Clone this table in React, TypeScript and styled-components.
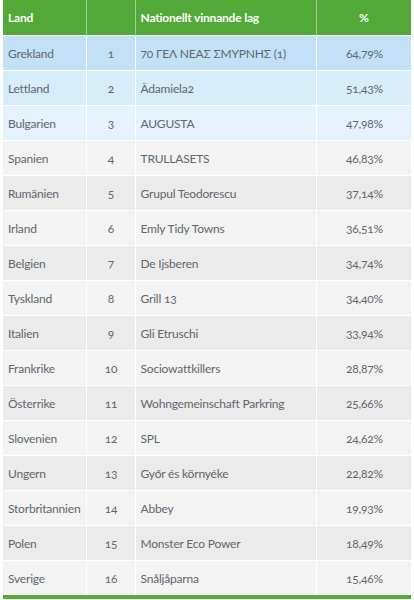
import * as React from 'react'
import styled, { createGlobalStyle } from 'styled-components'

type Row = {
  land: string
  rank: number
  team: string
  pct: string
}

const rows: Row[] = [
  { land: 'Grekland', rank: 1, team: '70 ΓΕΛ ΝΕΑΣ ΣΜΥΡΝΗΣ (1)', pct: '64,79%' },
  { land: 'Lettland', rank: 2, team: 'Ādamiela2', pct: '51,43%' },
  { land: 'Bulgarien', rank: 3, team: 'AUGUSTA', pct: '47,98%' },
  { land: 'Spanien', rank: 4, team: 'TRULLASETS', pct: '46,83%' },
  { land: 'Rumänien', rank: 5, team: 'Grupul Teodorescu', pct: '37,14%' },
  { land: 'Irland', rank: 6, team: 'Emly Tidy Towns', pct: '36,51%' },
  { land: 'Belgien', rank: 7, team: 'De Ijsberen', pct: '34,74%' },
  { land: 'Tyskland', rank: 8, team: 'Grill 13', pct: '34,40%' },
  { land: 'Italien', rank: 9, team: 'Gli Etruschi', pct: '33,94%' },
  { land: 'Frankrike', rank: 10, team: 'Sociowattkillers', pct: '28,87%' },
  { land: 'Österrike', rank: 11, team: 'Wohngemeinschaft Parkring', pct: '25,66%' },
  { land: 'Slovenien', rank: 12, team: 'SPL', pct: '24,62%' },
  { land: 'Ungern', rank: 13, team: 'Győr és környéke', pct: '22,82%' },
  { land: 'Storbritannien', rank: 14, team: 'Abbey', pct: '19,93%' },
  { land: 'Polen', rank: 15, team: 'Monster Eco Power', pct: '18,49%' },
  { land: 'Sverige', rank: 16, team: 'Snåljåparna', pct: '15,46%' },
]

const GlobalStyle = createGlobalStyle`
  body {
    margin: 0;
    background: #ffffff;
    font-family: Lato, "Open Sans", sans-serif;
  }
`

const Wrap = styled.div`
  padding: 0 3px;
  width: 408px;
`

const Table = styled.table`
  width: 408px;
  border-collapse: collapse;
  table-layout: fixed;
  font-size: 12px;
  letter-spacing: -0.2px;
  color: #61666d;
  border-bottom: 4px solid #56ab3c;
  font-variant-numeric: oldstyle-nums;
`

const HeadCell = styled.th<{ $align?: string }>`
  background: #52a937;
  color: #ffffff;
  font-weight: 700;
  font-size: 12px;
  height: 35px;
  padding: 0 5px;
  text-align: ${p => p.$align || 'left'};
  border-right: 1px solid rgba(255, 255, 255, 0.45);
  &:last-child {
    border-right: none;
  }
`

const tint = (i: number): string => {
  if (i === 0) return '#c2e1f6'
  if (i === 1) return '#d7edfa'
  if (i === 2) return '#e4f2fb'
  return i % 2 === 1 ? '#f3f3f3' : '#ebebeb'
}

const BodyRow = styled.tr<{ $bg: string }>`
  background: ${p => p.$bg};
  border-top: 1px solid #ffffff;
`

const Cell = styled.td<{ $align?: string; $padRight?: number }>`
  height: 34px;
  padding: 0 ${p => p.$padRight ?? 4}px 0 5px;
  text-align: ${p => p.$align || 'left'};
  white-space: nowrap;
  overflow: hidden;
  border-right: 1px solid #ffffff;
  &:last-child {
    border-right: none;
  }
`

export default function App() {
  return (
    <Wrap>
      <GlobalStyle />
      <Table>
        <colgroup>
          <col style={{ width: 83 }} />
          <col style={{ width: 49 }} />
          <col style={{ width: 181 }} />
          <col style={{ width: 95 }} />
        </colgroup>
        <thead>
          <tr>
            <HeadCell>Land</HeadCell>
            <HeadCell />
            <HeadCell>Nationellt vinnande lag</HeadCell>
            <HeadCell $align="center">%</HeadCell>
          </tr>
        </thead>
        <tbody>
          {rows.map((r, i) => (
            <BodyRow key={r.land} $bg={tint(i)}>
              <Cell>{r.land}</Cell>
              <Cell $align="center">{r.rank}</Cell>
              <Cell>{r.team}</Cell>
              <Cell $align="right" $padRight={28}>{r.pct}</Cell>
            </BodyRow>
          ))}
        </tbody>
      </Table>
    </Wrap>
  )
}
